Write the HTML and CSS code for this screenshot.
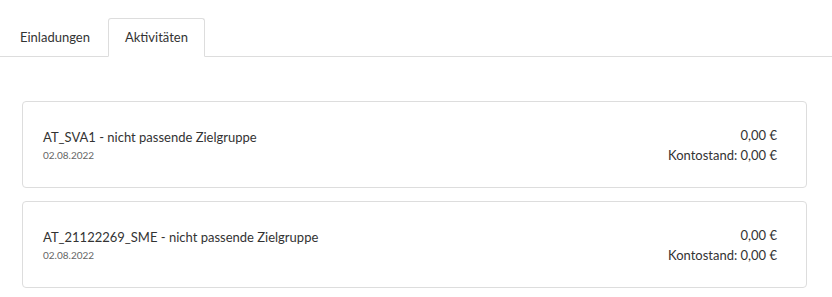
FILE: index.html
```html
<!DOCTYPE html>
<html lang="de">
<head>
    <meta charset="UTF-8">
    <meta name="viewport" content="width=device-width, initial-scale=1.0">
    <title>Aktivitäten</title>
    <link rel="stylesheet" href="styles.css">
</head>
<body>

<!-- Tabs -->
<ul class="tabs">
    <li class="tab">Einladungen</li>
    <li class="tab active">Aktivitäten</li>
</ul>

<!-- Activity list -->
<div class="activities">
    <div class="activity">
        <div class="activity-info">
            <div class="activity-title">AT_SVA1 - nicht passende Zielgruppe</div>
            <div class="activity-date">02.08.2022</div>
        </div>
        <div class="activity-amount">
            <div>0,00 €</div>
            <div>Kontostand: 0,00 €</div>
        </div>
    </div>

    <div class="activity">
        <div class="activity-info">
            <div class="activity-title">AT_21122269_SME - nicht passende Zielgruppe</div>
            <div class="activity-date">02.08.2022</div>
        </div>
        <div class="activity-amount">
            <div>0,00 €</div>
            <div>Kontostand: 0,00 €</div>
        </div>
    </div>
</div>

</body>
</html>
```

FILE: styles.css
```css
body {
    margin: 0;
    font-family: 'Lato', 'Liberation Sans', sans-serif;
    font-size: 13px;
    color: #333333;
    background-color: #ffffff;
}

.tabs {
    display: flex;
    list-style: none;
    margin: 18px 0 0 0;
    padding: 0 0 0 3px;
    border-bottom: 1px solid #dddddd;
}

.tab {
    height: 37px;
    line-height: 37px;
    padding: 0 16px;
    margin-right: 1px;
    margin-bottom: -1px;
    border: 1px solid transparent;
    border-radius: 3px 3px 0 0;
    color: #333333;
}

.tab.active {
    border-color: #dddddd;
    border-bottom-color: #ffffff;
}

.activities {
    margin: 44px 25px 0 22px;
    display: flex;
    flex-direction: column;
    gap: 13px;
}

.activity {
    display: flex;
    justify-content: space-between;
    align-items: center;
    height: 85px;
    padding: 0 29px 0 20px;
    border: 1px solid #dddddd;
    border-radius: 4px;
}

.activity-title {
    line-height: 20px;
}

.activity-date {
    font-size: 10px;
    color: #666666;
    line-height: 16px;
}

.activity-amount {
    text-align: right;
    line-height: 20px;
}
```
